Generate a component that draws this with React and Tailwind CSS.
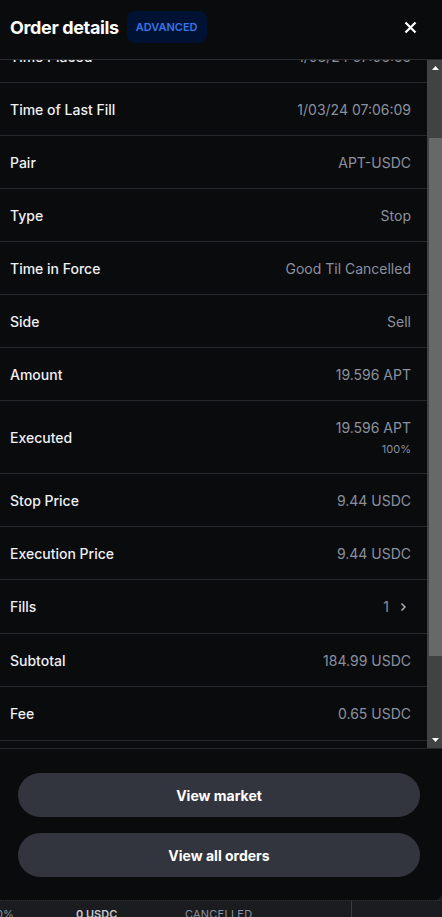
import React, { useEffect, useRef } from "react";

const rows = [
  { label: "Status", value: "Filled" },
  { label: "Time Placed", value: "1/03/24 07:05:55" },
  { label: "Time of Last Fill", value: "1/03/24 07:06:09" },
  { label: "Pair", value: "APT-USDC" },
  { label: "Type", value: "Stop" },
  { label: "Time in Force", value: "Good Til Cancelled" },
  { label: "Side", value: "Sell" },
  { label: "Amount", value: "19.596 APT" },
  { label: "Executed", value: "19.596 APT", sub: "100%" },
  { label: "Stop Price", value: "9.44 USDC" },
  { label: "Execution Price", value: "9.44 USDC" },
  { label: "Fills", value: "1", link: true },
  { label: "Subtotal", value: "184.99 USDC" },
  { label: "Fee", value: "0.65 USDC", tall: true },
  { label: "Total", value: "184.34 USDC" },
];

function Row({ row }) {
  const height = row.sub ? "h-[73px]" : row.link || row.tall ? "h-[54px]" : "h-[53px]";
  return (
    <div className={`flex ${height} items-center justify-between border-b border-[#26272b] pl-[10px] pr-[16px]`}>
      <span className="text-[14px] font-medium text-[#eef0f3]">{row.label}</span>
      {row.sub ? (
        <div className="flex flex-col items-end">
          <span className="text-[14px] text-[#8a919e]">{row.value}</span>
          <span className="mt-[3px] text-[11px] text-[#8a919e]">{row.sub}</span>
        </div>
      ) : row.link ? (
        <div className="flex items-center gap-[11px] pr-[4px] text-[#8a919e]">
          <span className="text-[14px]">{row.value}</span>
          <svg width="7" height="10" viewBox="0 0 7 10" fill="none">
            <path d="M1.5 1.5 5 5 1.5 8.5" stroke="#b5b9c0" strokeWidth="1.4" />
          </svg>
        </div>
      ) : (
        <span className="text-[14px] text-[#8a919e]">{row.value}</span>
      )}
    </div>
  );
}

function Scrollbar() {
  return (
    <div className="flex w-[15px] shrink-0 flex-col bg-[#424242]">
      <div className="flex h-[16px] items-center justify-center pl-[1px]">
        <svg width="7" height="4" viewBox="0 0 7 4">
          <path d="M3.5 0 7 4H0z" fill="#fff" />
        </svg>
      </div>
      <div className="h-[62px]" />
      <div className="ml-[2px] h-[518px] bg-[#686868]" />
      <div className="flex-1" />
      <div className="flex h-[16px] items-center justify-center pl-[1px]">
        <svg width="7" height="4" viewBox="0 0 7 4">
          <path d="M0 0h7L3.5 4z" fill="#fff" />
        </svg>
      </div>
    </div>
  );
}

export default function App() {
  const scrollRef = useRef(null);

  useEffect(() => {
    if (scrollRef.current) scrollRef.current.scrollTop = 83;
  }, []);

  return (
    <div className="h-[917px] w-[442px] overflow-hidden bg-[#1b1c20] font-['Inter',sans-serif]">
      <div className="flex h-[900px] flex-col rounded-br-lg bg-[#0a0b0d]">
        <div className="flex h-[60px] shrink-0 items-center border-b border-[#2b2c30] pb-[5px] pl-[10px] pr-[25px]">
          <h1 className="text-[18px] font-bold tracking-[-0.02em] text-white">Order details</h1>
          <span className="ml-[8px] flex h-[32px] items-center rounded-lg bg-[#001233] px-[9px] text-[11px] font-semibold text-[#3b73e8]">
            ADVANCED
          </span>
          <button className="ml-auto text-white">
            <svg width="13" height="13" viewBox="0 0 13 13" fill="none">
              <path d="M1.5 1.5l10 10M11.5 1.5l-10 10" stroke="white" strokeWidth="2.2" />
            </svg>
          </button>
        </div>

        <div className="flex h-[688px] shrink-0">
          <div ref={scrollRef} className="min-w-0 flex-1 overflow-y-scroll [scrollbar-width:none]">
            {rows.map((row) => (
              <Row key={row.label} row={row} />
            ))}
            <div className="h-[54px]" />
          </div>
          <Scrollbar />
        </div>

        <div className="flex flex-1 flex-col gap-[16px] border-t border-[#26272b] pl-[18px] pr-[22px] pt-[24px]">
          <button className="h-[44px] rounded-full bg-[#32353d] text-[14px] font-bold text-white">View market</button>
          <button className="h-[44px] rounded-full bg-[#32353d] text-[14px] font-bold text-white">View all orders</button>
        </div>
      </div>

      <div className="flex h-[17px] items-start border-t border-dotted border-[#2e3035] text-[11px] text-[#8a919e]">
        <span className="-ml-[4px] w-[80px] pt-[5px]">0%</span>
        <span className="w-[109px] pt-[5px] font-semibold text-[#c7cad0]">0 USDC</span>
        <span className="w-[166px] pt-[5px] tracking-[0.02em]">CANCELLED</span>
        <span className="h-full w-px bg-[#3a3c42]" />
      </div>
    </div>
  );
}
